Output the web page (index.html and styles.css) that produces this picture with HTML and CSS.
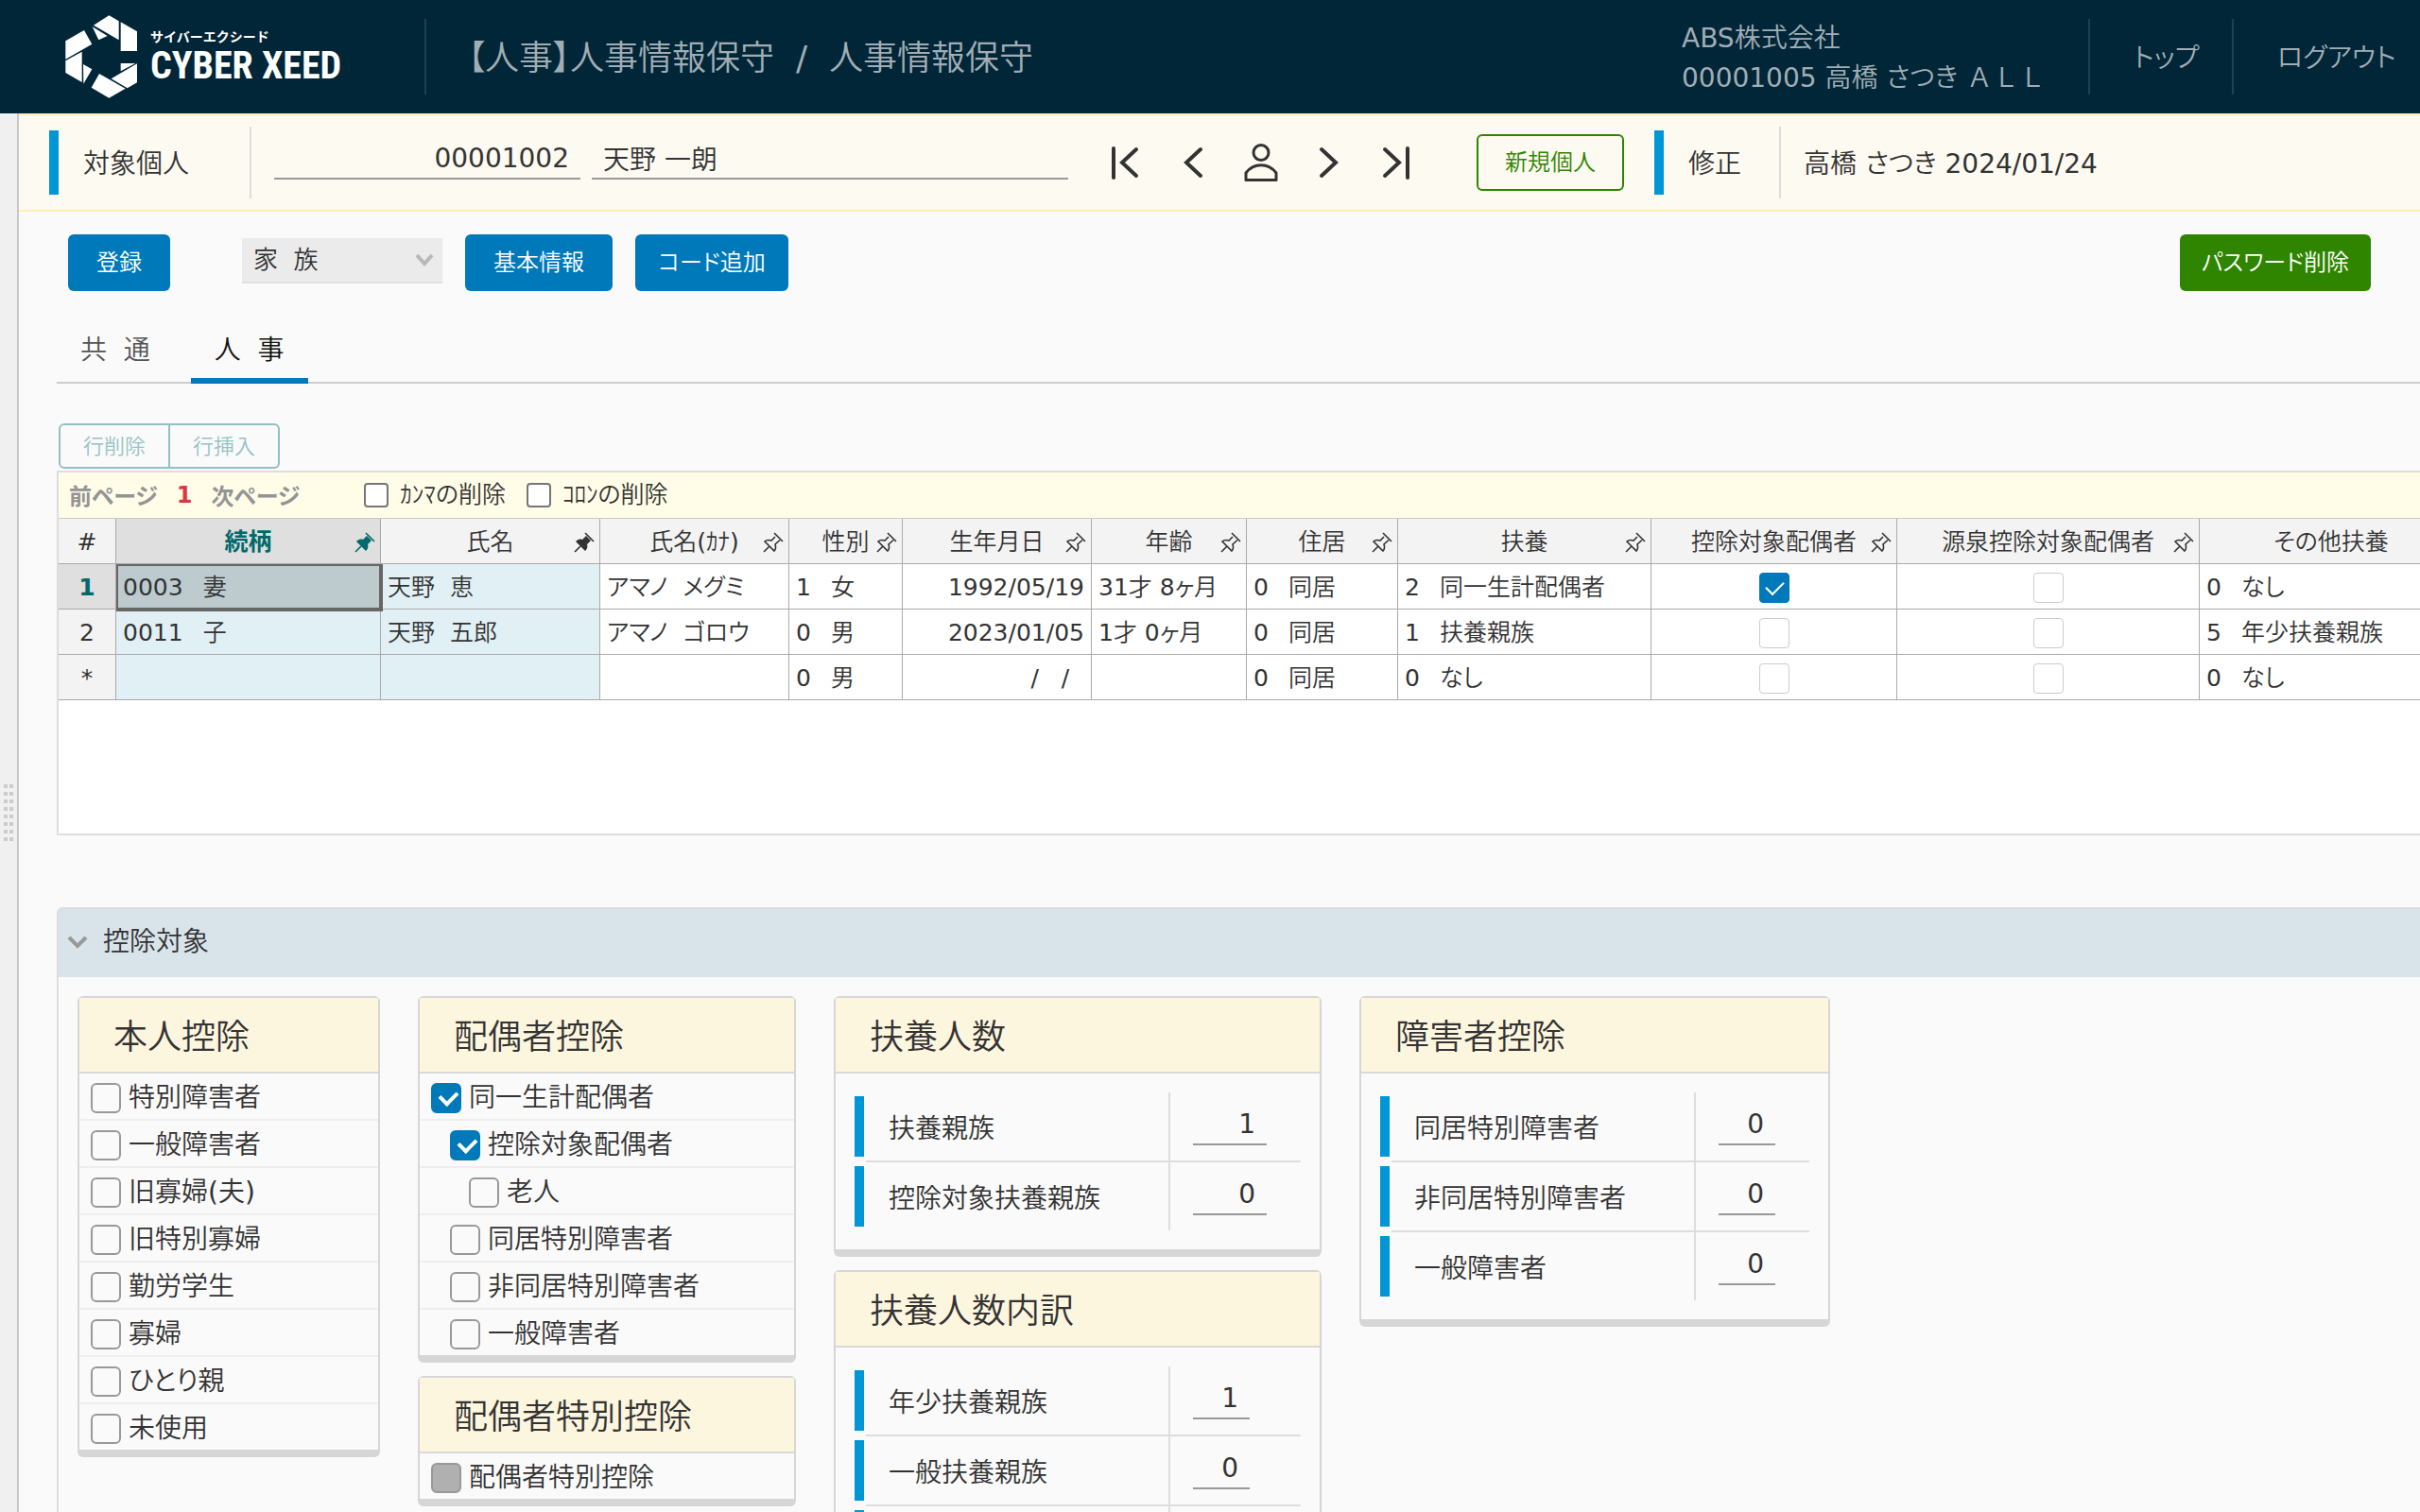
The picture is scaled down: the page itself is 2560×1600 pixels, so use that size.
FILE: index.html
```html
<!DOCTYPE html>
<html lang="ja">
<head>
<meta charset="utf-8">
<title>人事情報保守</title>
<link rel="stylesheet" href="styles.css">
</head>
<body>
<svg class="sprite" aria-hidden="true">
  <symbol id="pin" viewBox="0 0 22 22">
    <path d="M12 1 L21 10 M13 5 L9 9 C6 8 4 8 2 10 L12 20 C14 18 14 16 13 13 L18 8.500 M7 15 L1 21" fill="none" stroke="currentColor" stroke-width="1.600"/>
  </symbol>
  <symbol id="pin-solid" viewBox="0 0 22 22">
    <path d="M13 4 L9 8 C6 7 4 8 2 10 L12 20 C14 18 15 16 14 13 L18 9 Z" fill="currentColor"/>
    <path d="M12 1 L21 10 M7 15 L1 21" fill="none" stroke="currentColor" stroke-width="1.600"/>
  </symbol>
</svg>

<header class="header">
  <a class="logo" href="#" aria-label="サイバーエクシード CYBER XEED">
    <svg class="logo-mark" viewBox="27 18 228 262" aria-hidden="true">
      <g fill="#fff">
        <path d="M166 18 L197 36 V96 L117 49 Z"/>
        <path d="M203 39 L255 69 V131 H203 Z"/>
        <path d="M113 54 L161 83 L133 96 Z"/>
        <path d="M87 65 L112 109 L28 157 V99 Z"/>
        <path d="M28 162 L80 133 V230 L28 200 Z"/>
        <path d="M84 173 L112 189 L85 235 Z"/>
        <path d="M203 170 H250 L203 195 Z"/>
        <path d="M255 171 V231 L224 249 L173 219 Z"/>
        <path d="M135 203 L218 250 L166 280 L110 247 Z"/>
      </g>
    </svg>
    <span class="logo-text">
      <span class="logo-kana">サイバーエクシード</span>
      <span class="logo-name">CYBER XEED</span>
    </span>
  </a>
  <h1 class="page-title">【人事】人事情報保守&nbsp; /&nbsp; 人事情報保守</h1>
  <div class="account">
    <div>ABS株式会社</div>
    <div>00001005 高橋 さつき <span class="wide">ＡＬＬ</span></div>
  </div>
  <a class="header-link top-link" href="#">トップ</a>
  <a class="header-link logout-link" href="#">ログアウト</a>
</header>

<div class="shell">
  <div class="splitter" role="separator"><div class="grip"></div></div>
  <div class="content">
    <div class="target">
      <span class="accent"></span>
      <label class="target-label" for="person-code">対象個人</label>
      <div class="target-fields">
        <input class="field code" id="person-code" value="00001002">
        <input class="field name" value="天野 一朗" aria-label="氏名">
      </div>
      <nav class="record-nav" aria-label="個人の移動">
        <button type="button" aria-label="先頭"><svg viewBox="0 0 40 40"><path d="M8 5 V36 M32 6 L17 20 L32 34"/></svg></button>
        <button type="button" aria-label="前へ"><svg viewBox="0 0 40 40"><path d="M28 6 L13 20 L28 34"/></svg></button>
        <button type="button" aria-label="個人検索"><svg class="thin" viewBox="0 0 40 40"><circle cx="20" cy="9.500" r="8"/><path d="M4 38.500 V31 C12 20 28 20 36 31 V38.500 Z"/></svg></button>
        <button type="button" aria-label="次へ"><svg viewBox="0 0 40 40"><path d="M12 6 L27 20 L12 34"/></svg></button>
        <button type="button" aria-label="最後"><svg viewBox="0 0 40 40"><path d="M31 5 V36 M7 6 L22 20 L7 34"/></svg></button>
      </nav>
      <button type="button" class="btn outline">新規個人</button>
      <span class="accent"></span>
      <span class="edit-label">修正</span>
      <span class="edit-value">高橋 さつき 2024/01/24</span>
    </div>

    <main class="main">
      <div class="toolbar">
        <button type="button" class="btn">登録</button>
        <div class="select-wrap">
          <select aria-label="画面"><option>家&nbsp; 族</option></select>
          <svg viewBox="0 0 20 14" aria-hidden="true"><path d="M2 2 L10 11 L18 2" fill="none" stroke="#b8b8b8" stroke-width="4"/></svg>
        </div>
        <button type="button" class="btn">基本情報</button>
        <button type="button" class="btn add-code">コード追加</button>
        <button type="button" class="btn green">パスワード削除</button>
      </div>

      <nav class="tabs">
        <a href="#" class="tab">共&nbsp; 通</a>
        <a href="#" class="tab active">人&nbsp; 事</a>
      </nav>

      <div class="row-buttons">
        <button type="button">行削除</button><button type="button">行挿入</button>
      </div>

      <div class="grid">
        <div class="pager">
          <a href="#" class="page-link">前ページ</a>
          <b class="page-now">1</b>
          <a href="#" class="page-link next">次ページ</a>
          <label><input type="checkbox" class="check small">ｶﾝﾏの削除</label>
          <label><input type="checkbox" class="check small">ｺﾛﾝの削除</label>
        </div>
        <table>
          <colgroup>
            <col class="c-no"><col class="c-rel"><col class="c-name"><col class="c-kana"><col class="c-sex"><col class="c-birth"><col class="c-age"><col class="c-live"><col class="c-dep"><col class="c-spouse"><col class="c-source"><col class="c-other">
          </colgroup>
          <thead>
            <tr>
              <th>#</th>
              <th class="current">続柄<svg class="pin"><use href="#pin-solid"/></svg></th>
              <th>氏名<svg class="pin"><use href="#pin-solid"/></svg></th>
              <th>氏名(ｶﾅ)<svg class="pin"><use href="#pin"/></svg></th>
              <th>性別<svg class="pin"><use href="#pin"/></svg></th>
              <th>生年月日<svg class="pin"><use href="#pin"/></svg></th>
              <th>年齢<svg class="pin"><use href="#pin"/></svg></th>
              <th>住居<svg class="pin"><use href="#pin"/></svg></th>
              <th>扶養<svg class="pin"><use href="#pin"/></svg></th>
              <th>控除対象配偶者<svg class="pin"><use href="#pin"/></svg></th>
              <th>源泉控除対象配偶者<svg class="pin"><use href="#pin"/></svg></th>
              <th>その他扶養<svg class="pin"><use href="#pin"/></svg></th>
            </tr>
          </thead>
          <tbody>
            <tr>
              <th class="current">1</th>
              <td class="key selected"><span class="num">0003</span>妻</td>
              <td class="key">天野&nbsp; 恵</td>
              <td>アマノ&nbsp; メグミ</td>
              <td><span class="num">1</span>女</td>
              <td class="right">1992/05/19</td>
              <td>31才 8ヶ月</td>
              <td><span class="num">0</span>同居</td>
              <td><span class="num">2</span>同一生計配偶者</td>
              <td class="center"><input type="checkbox" class="check cell" aria-label="控除対象配偶者" checked></td>
              <td class="center"><input type="checkbox" class="check cell" aria-label="源泉控除対象配偶者"></td>
              <td><span class="num">0</span>なし</td>
            </tr>
            <tr>
              <th>2</th>
              <td class="key"><span class="num">0011</span>子</td>
              <td class="key">天野&nbsp; 五郎</td>
              <td>アマノ&nbsp; ゴロウ</td>
              <td><span class="num">0</span>男</td>
              <td class="right">2023/01/05</td>
              <td>1才 0ヶ月</td>
              <td><span class="num">0</span>同居</td>
              <td><span class="num">1</span>扶養親族</td>
              <td class="center"><input type="checkbox" class="check cell" aria-label="控除対象配偶者"></td>
              <td class="center"><input type="checkbox" class="check cell" aria-label="源泉控除対象配偶者"></td>
              <td><span class="num">5</span>年少扶養親族</td>
            </tr>
            <tr>
              <th>*</th>
              <td class="key"></td>
              <td class="key"></td>
              <td></td>
              <td><span class="num">0</span>男</td>
              <td class="right">/&nbsp;&nbsp; /&nbsp;&nbsp;</td>
              <td></td>
              <td><span class="num">0</span>同居</td>
              <td><span class="num">0</span>なし</td>
              <td class="center"><input type="checkbox" class="check cell" aria-label="控除対象配偶者"></td>
              <td class="center"><input type="checkbox" class="check cell" aria-label="源泉控除対象配偶者"></td>
              <td><span class="num">0</span>なし</td>
            </tr>
          </tbody>
        </table>
      </div>

      <section class="section">
        <h2 class="section-head">
          <svg viewBox="0 0 22 14" aria-hidden="true"><path d="M2 2 L11 11 L20 2" fill="none" stroke="#999" stroke-width="4"/></svg>
          控除対象
        </h2>
        <div class="panels">
          <div class="column self">
            <div class="panel">
              <h3>本人控除</h3>
              <label class="option"><input type="checkbox" class="check">特別障害者</label>
              <label class="option"><input type="checkbox" class="check">一般障害者</label>
              <label class="option"><input type="checkbox" class="check">旧寡婦(夫)</label>
              <label class="option"><input type="checkbox" class="check">旧特別寡婦</label>
              <label class="option"><input type="checkbox" class="check">勤労学生</label>
              <label class="option"><input type="checkbox" class="check">寡婦</label>
              <label class="option"><input type="checkbox" class="check">ひとり親</label>
              <label class="option"><input type="checkbox" class="check">未使用</label>
            </div>
          </div>
          <div class="column spouse">
            <div class="panel">
              <h3>配偶者控除</h3>
              <label class="option"><input type="checkbox" class="check" checked>同一生計配偶者</label>
              <label class="option level-2"><input type="checkbox" class="check" checked>控除対象配偶者</label>
              <label class="option level-3"><input type="checkbox" class="check">老人</label>
              <label class="option level-2"><input type="checkbox" class="check">同居特別障害者</label>
              <label class="option level-2"><input type="checkbox" class="check">非同居特別障害者</label>
              <label class="option level-2"><input type="checkbox" class="check">一般障害者</label>
            </div>
            <div class="panel">
              <h3>配偶者特別控除</h3>
              <label class="option"><input type="checkbox" class="check" disabled>配偶者特別控除</label>
            </div>
          </div>
          <div class="column dependents">
            <div class="panel">
              <h3>扶養人数</h3>
              <div class="counts wide-values">
                <div class="count"><label for="dep-1">扶養親族</label><div class="value"><input class="field" id="dep-1" value="1"></div></div>
                <div class="count"><label for="dep-2">控除対象扶養親族</label><div class="value"><input class="field" id="dep-2" value="0"></div></div>
              </div>
            </div>
            <div class="panel">
              <h3>扶養人数内訳</h3>
              <div class="counts">
                <div class="count"><label for="det-1">年少扶養親族</label><div class="value"><input class="field" id="det-1" value="1"></div></div>
                <div class="count"><label for="det-2">一般扶養親族</label><div class="value"><input class="field" id="det-2" value="0"></div></div>
                <div class="count"><label for="det-3"></label><div class="value"><input class="field" id="det-3"></div></div>
              </div>
            </div>
          </div>
          <div class="column disabled-persons">
            <div class="panel">
              <h3>障害者控除</h3>
              <div class="counts">
                <div class="count"><label for="dis-1">同居特別障害者</label><div class="value"><input class="field" id="dis-1" value="0"></div></div>
                <div class="count"><label for="dis-2">非同居特別障害者</label><div class="value"><input class="field" id="dis-2" value="0"></div></div>
                <div class="count"><label for="dis-3">一般障害者</label><div class="value"><input class="field" id="dis-3" value="0"></div></div>
              </div>
            </div>
          </div>
        </div>
      </section>
    </main>
  </div>
</div>
</body>
</html>
```
FILE: styles.css
```css
* { box-sizing: border-box; }

body {
  margin: 0;
  height: 100vh;
  overflow: hidden;
  display: flex;
  flex-direction: column;
  background: #fafafa;
  color: #333;
  font-family: "DejaVu Sans", "Noto Sans CJK JP DemiLight", "Noto Sans CJK JP", sans-serif;
  font-size: 28px;
  font-weight: 400;
  line-height: 40px;
  font-feature-settings: "palt";
}

button, input, select {
  font: inherit;
  font-feature-settings: inherit;
  color: inherit;
}

button { cursor: pointer; }
a { color: inherit; text-decoration: none; }
h1, h2, h3 { margin: 0; font-weight: inherit; }
.sprite { display: none; }

/* Header */
.header {
  flex: none;
  display: flex;
  align-items: center;
  height: 120px;
  background: #002638;
  color: #a1adb4;
  white-space: nowrap;
}

.logo {
  display: flex;
  align-items: center;
  gap: 14px;
  width: 449px;
  padding-left: 69px;
  color: #fff;
}

.logo-mark { width: 76px; height: 88px; }
.logo-text { display: flex; flex-direction: column; }
.logo-kana {
  font-family: "Noto Sans CJK JP", sans-serif;
  font-size: 14px;
  font-weight: 700;
  line-height: 20px;
  font-feature-settings: normal;
}
.logo-name {
  font-family: "Roboto Condensed", "Roboto", sans-serif;
  font-size: 40px;
  font-weight: 700;
  line-height: 44px;
}

.page-title {
  flex: 1;
  height: 80px;
  padding-left: 44px;
  border-left: 2px solid #1f4152;
  font-size: 36px;
  line-height: 84px;
}

.account { width: 430px; padding-top: 4px; line-height: 42px; }
.wide { font-feature-settings: normal; }

.header-link {
  height: 80px;
  border-left: 2px solid #1f4152;
  padding-left: 46px;
  line-height: 84px;
}

.top-link { width: 152px; }
.logout-link { width: 199px; }

/* Frame */
.shell { flex: 1; display: flex; min-height: 0; }

.splitter {
  flex: none;
  width: 20px;
  display: flex;
  align-items: center;
  padding-left: 4px;
  background: #f0f0f0;
  border-right: 2px solid #c8c8c8;
}

.grip {
  width: 12px;
  height: 60px;
  background:
    repeating-linear-gradient(to bottom, transparent 0 4px, #f0f0f0 4px 8px),
    repeating-linear-gradient(to right, #ccc 0 4px, #f0f0f0 4px 6px);
}

.content { flex: 1; min-width: 0; overflow: hidden; }

/* Target person */
.target {
  display: flex;
  align-items: center;
  height: 104px;
  padding-left: 32px;
  background: #fdfaf1;
  border-top: 2px solid #fff0b3;
  border-bottom: 2px solid #fff0b3;
  white-space: nowrap;
}

.accent { width: 10px; height: 68px; background: #0096d6; }

.target-label, .edit-label, .edit-value {
  height: 76px;
  line-height: 80px;
}
.target-label, .edit-label {
  padding-left: 26px;
  border-right: 2px solid #ddd;
}

.target-label { width: 204px; }
.edit-label { width: 124px; }
.edit-value { padding-left: 24px; }

.target-fields { display: flex; gap: 12px; padding-left: 24px; }

.field {
  height: 46px;
  padding: 2px 12px 0;
  border: 0;
  border-bottom: 2px solid #999;
  border-radius: 0;
  background: transparent;
  outline: 0;
}

.code { width: 324px; text-align: right; }
.name { width: 504px; }
.target-fields .field { margin-bottom: 10px; }

.record-nav { display: flex; gap: 32px; margin: 0 64px 0 40px; }
.record-nav button {
  width: 40px;
  height: 40px;
  padding: 0;
  border: 0;
  background: none;
}
.record-nav svg {
  display: block;
  width: 40px;
  height: 40px;
  fill: none;
  stroke: #333;
  stroke-width: 4;
  stroke-linecap: round;
}
.record-nav .thin { stroke-width: 3; stroke-linejoin: round; }

.btn {
  height: 60px;
  padding: 0 30px;
  border: 0;
  border-radius: 6px;
  background: #0079ba;
  color: #fff;
  font-size: 24px;
  white-space: nowrap;
}
.btn.add-code { width: 162px; padding: 0; }
.btn.green { width: 202px; margin-left: auto; padding: 0; background: #2f8500; }
.btn.outline {
  margin-right: 32px;
  padding: 0 28px;
  border: 2px solid #2f8500;
  background: transparent;
  color: #2f8500;
}

/* Main area */
.main { padding: 24px 0 0 40px; }

.toolbar {
  display: flex;
  align-items: center;
  gap: 24px;
  padding: 0 52px 0 12px;
}

.select-wrap {
  position: relative;
  width: 212px;
  height: 52px;
  margin: 0 0 0 52px;
}
.select-wrap select {
  width: 100%;
  height: 48px;
  padding: 0 12px;
  appearance: none;
  border: 0;
  border-bottom: 2px solid #e0e0e0;
  border-radius: 0;
  background: #ebebeb;
  font-size: 26px;
}
.select-wrap svg {
  position: absolute;
  top: 16px;
  right: 9px;
  width: 20px;
  height: 14px;
  pointer-events: none;
}

.tabs {
  display: flex;
  gap: 18px;
  height: 98px;
  padding-top: 24px;
  border-bottom: 2px solid #ccc;
}
.tab {
  height: 74px;
  padding: 0 25px;
  color: #555;
  line-height: 78px;
}
.tab.active { border-bottom: 6px solid #0079ba; color: #111; }

.row-buttons { display: flex; margin: 42px 0 2px 2px; }
.row-buttons button {
  width: 118px;
  height: 48px;
  padding: 2px 0 0;
  border: 2px solid #94c0c2;
  background: none;
  color: #94c4c5;
  font-size: 22px;
}
.row-buttons button:first-child { border-radius: 6px 0 0 6px; }
.row-buttons button:last-child { width: 116px; border-left: 0; border-radius: 0 6px 6px 0; }

/* Family grid */
.grid {
  min-height: 386px;
  overflow: hidden;
  border: 2px solid #ddd;
  border-right: 0;
  background: #fff;
}

.pager {
  display: flex;
  align-items: center;
  height: 49px;
  padding-left: 11px;
  background: #fffde7;
  border-bottom: 1px solid #c8c8c8;
  font-size: 24px;
}
.page-link {
  color: #949494;
  font-family: "Noto Sans CJK JP", sans-serif;
  font-weight: 700;
}
.page-link.next { margin-right: 68px; }
.page-now { margin: 0 20px; color: #dc3545; }
.pager label { display: flex; align-items: center; gap: 12px; margin-right: 22px; font-size: 25px; }

table {
  width: 2544px;
  table-layout: fixed;
  border-collapse: separate;
  border-spacing: 0;
  font-size: 25px;
}
.c-no { width: 61px; }
.c-rel { width: 280px; }
.c-name { width: 232px; }
.c-kana { width: 200px; }
.c-sex { width: 120px; }
.c-birth { width: 200px; }
.c-age { width: 164px; }
.c-live { width: 160px; }
.c-dep { width: 268px; }
.c-spouse { width: 260px; }
.c-source { width: 320px; }
.c-other { width: 279px; }

th, td {
  height: 48px;
  padding: 2px 7px 0;
  border-right: 1px solid #aaa;
  border-bottom: 1px solid #aaa;
  line-height: 40px;
  white-space: nowrap;
}
th {
  position: relative;
  background: #f3f3f3;
  font-weight: inherit;
  text-align: center;
}
th.current {
  background: #dfdfdf;
  color: #00696b;
  font-family: "DejaVu Sans", "Noto Sans CJK JP", sans-serif;
  font-weight: 700;
}
td.key { background: #e1f0f5; }
td.selected { background: #bdcbcf; outline: 4px solid #666; outline-offset: -2px; }
td.right { text-align: right; }
td.center { text-align: center; }
.num { margin-right: 21px; }

.pin {
  position: absolute;
  top: 14px;
  right: 5px;
  width: 22px;
  height: 22px;
}

/* Check boxes */
.check {
  flex: none;
  position: relative;
  width: 32px;
  height: 32px;
  margin: 0;
  appearance: none;
  border: 2px solid #999;
  border-radius: 6px;
  background: transparent;
}
.check:checked { border-color: #0079ba; background: #0079ba; }
.check:checked::after {
  content: "";
  position: absolute;
  left: 10px;
  top: 4px;
  width: 9px;
  height: 14px;
  border: solid #fff;
  border-width: 0 4px 4px 0;
  transform: rotate(45deg);
}
.option .check:checked::after { top: 3px; }
.check:disabled { background: #b0b0b0; }
.check.small { width: 26px; height: 26px; border-color: #767676; border-radius: 4px; background: #fff; }
.check.cell { display: block; margin: 0 auto; border: 1px solid #ccc; border-radius: 4px; }
.check.cell:checked { border-color: #0079ba; }
.check.cell:checked::after { height: 16px; border-width: 0 2px 2px 0; }

/* Deduction section */
.section {
  margin-top: 76px;
  border: 2px solid #ddd;
  border-right: 0;
  border-bottom: 0;
  border-radius: 6px 0 0 0;
}
.section-head {
  display: flex;
  align-items: center;
  gap: 16px;
  height: 72px;
  padding: 0 0 2px 9px;
  background: #d9e4ea;
  font-size: 28px;
}
.section-head svg { width: 22px; height: 14px; }

.panels { display: flex; align-items: flex-start; gap: 40px; padding: 20px; }
.column { flex: none; display: flex; flex-direction: column; gap: 14px; }
.self { width: 320px; }
.spouse { width: 400px; }
.dependents { width: 516px; }
.disabled-persons { width: 498px; }

.panel {
  border: 2px solid #d6d6d6;
  border-bottom-width: 8px;
  border-radius: 6px;
}
.panel h3 {
  height: 80px;
  padding-left: 36px;
  background: #fdf6df;
  border-bottom: 2px solid #d9d9d9;
  font-size: 36px;
  line-height: 84px;
}

.option {
  display: flex;
  align-items: center;
  gap: 8px;
  height: 50px;
  padding: 4px 0 0 12px;
  border-bottom: 2px solid #eee;
}
.option:last-child { height: 48px; border-bottom: 0; }
.level-2 { padding-left: 32px; }
.level-3 { padding-left: 52px; }

.counts { padding: 20px; }
.count {
  display: flex;
  position: relative;
  margin-left: 12px;
  border-bottom: 2px solid #ddd;
}
.count:last-child { border-bottom: 0; }
.count::before {
  content: "";
  position: absolute;
  left: -12px;
  top: 4px;
  width: 10px;
  height: 64px;
  background: #0096d6;
}
.count label {
  flex: 1;
  height: 72px;
  padding-left: 24px;
  border-right: 2px solid #ddd;
  line-height: 78px;
}
.value { width: 138px; padding: 8px 0 0 24px; }
.disabled-persons .value { width: 120px; }
.value .field { width: 60px; height: 48px; padding-top: 4px; text-align: right; }
.wide-values .field { width: 78px; }
```
